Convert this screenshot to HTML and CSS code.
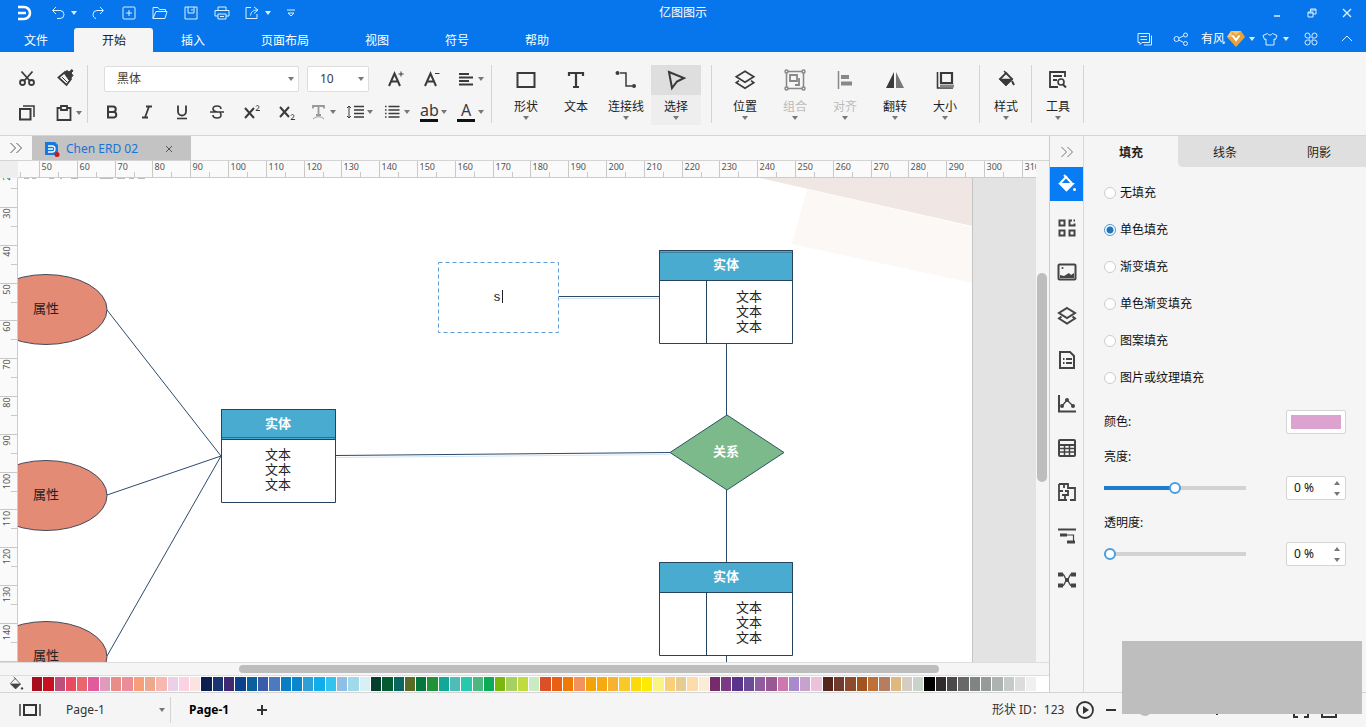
FILE: index.html
```html
<!DOCTYPE html>
<html lang="zh-CN">
<head>
<meta charset="utf-8">
<meta name="viewport" content="width=device-width, initial-scale=1">
<title>亿图图示</title>
<link rel="stylesheet" href="styles.css">
</head>
<body>
<svg class="sprite" aria-hidden="true">
  <symbol id="caret" viewBox="0 0 6 4"><path d="M0 0h6L3 4z" fill="currentColor"/></symbol>
  <symbol id="caret-up" viewBox="0 0 6 4"><path d="M0 4h6L3 0z" fill="currentColor"/></symbol>
  <symbol id="chevrons" viewBox="0 0 14 14"><path d="M1.500 2l5 5-5 5M7.500 2l5 5-5 5"/></symbol>
  <symbol id="layers" viewBox="0 0 20 20"><path d="M10 2l8 5-8 5-8-5z"/><path d="M4.500 10.500L2 12.500l8 5 8-5-2.500-2"/></symbol>
  <symbol id="bucket" viewBox="0 0 20 20"><path d="M9 3l6.500 7-6 6L3 9.500z"/><path d="M3.500 10h12l-6 6z" fill="currentColor"/><path d="M7 1l3 3"/><circle cx="17.500" cy="15.500" r="1.500" fill="currentColor" stroke="none"/></symbol>
</svg>

<div class="app">
  <header class="top">
    <div class="titlebar">
      <div class="quick">
        <svg class="logo" viewBox="0 0 18 16"><path d="M2 2h6a6 6 0 0 1 0 12H2M2 8h8" fill="none" stroke="#fff" stroke-width="2.600"/></svg>
        <button class="q q-undo" aria-label="撤销"><svg class="i14" viewBox="0 0 14 14"><path d="M5 1L1.500 4.500 5 8M2 4.500h7a3.500 3.500 0 0 1 0 8H6"/></svg><svg class="caret"><use href="#caret"/></svg></button>
        <button class="q" aria-label="重做"><svg class="i14" viewBox="0 0 14 14"><path d="M9 1l3.500 3.500L9 8M12 4.500H6a4 4 0 0 0-4 4c0 2 1 3.500 3 4"/></svg></button>
        <button class="q" aria-label="新建"><svg class="i14" viewBox="0 0 14 14"><rect x="1" y="1" width="12" height="12" rx="1"/><path d="M7 4v6M4 7h6"/></svg></button>
        <button class="q" aria-label="打开"><svg class="i16" viewBox="0 0 16 14"><path d="M1 12.500V1.500h5l1.500 2h6v2M1 12.500l3-7h11l-2 7z"/></svg></button>
        <button class="q" aria-label="保存"><svg class="i14" viewBox="0 0 14 14"><path d="M1 1h12v12H1zM4 1v6h6V1M8 3v2"/></svg></button>
        <button class="q" aria-label="打印"><svg class="i16" viewBox="0 0 16 14"><path d="M4 4V1h8v3M4 10H1V4.500h14V10h-3M4 8h8v5H4zM6 10.500h4"/></svg></button>
        <button class="q q-export" aria-label="导出"><svg class="i14" viewBox="0 0 14 14"><path d="M6 1.500H1v11h11V8M9 1l4 3-4 3.500M12.500 4C8 4 6 6 5.500 9.500"/></svg><svg class="caret"><use href="#caret"/></svg></button>
        <button class="q q-more" aria-label="更多"><svg class="i8" viewBox="0 0 8 8"><path d="M0 1h8M1 4l3 3 3-3z"/></svg></button>
      </div>
      <h1 class="title">亿图图示</h1>
      <div class="window-controls">
        <button aria-label="最小化"><svg class="i10" viewBox="0 0 10 10"><path d="M2 8h6" stroke-width="1.500"/></svg></button>
        <button aria-label="还原"><svg class="i10" viewBox="0 0 10 10"><path d="M1 4h5v5H1zM3.500 4V1H9v5H6M1 5h5M3.500 2H9"/></svg></button>
        <button aria-label="关闭"><svg class="i10" viewBox="0 0 10 10"><path d="M1 1l8 8M9 1L1 9" stroke-width="1.400"/></svg></button>
      </div>
    </div>
    <div class="menubar">
      <nav class="menu">
        <button class="menu-file">文件</button><button class="active">开始</button><button>插入</button><button>页面布局</button><button>视图</button><button>符号</button><button>帮助</button>
      </nav>
      <div class="account">
        <button aria-label="消息"><svg class="i16" viewBox="0 0 16 14"><path d="M1 1.500h11.500v9H5l-2 2v-2H1zM3.500 4.500h6.500M3.500 7.500h6.500M14.500 3.500v9.500H7"/></svg></button>
        <button aria-label="分享"><svg class="i16" viewBox="0 0 16 14"><circle cx="3.500" cy="7" r="2.500"/><circle cx="12.500" cy="3" r="2"/><circle cx="12.500" cy="11.500" r="2"/><path d="M6 6l4.500-2M6 8l4.500 2.500"/></svg></button>
        <button class="user">有风<svg class="badge" viewBox="0 0 18 16"><path d="M4 0h10l4 6-9 10L0 6z" fill="#e9a23b"/><path d="M4 0h10l-5 4zM0 6l4-6 2 6z" fill="#f6c56f"/><path d="M5.500 4.500L9 9l3.500-4.500" fill="none" stroke="#fff" stroke-width="2"/></svg><svg class="caret"><use href="#caret"/></svg></button>
        <button class="theme" aria-label="主题"><svg class="i16" viewBox="0 0 16 14"><path d="M5.500 1.500c1 2 4 2 5 0l4.500 2-1.500 4L12 7v6H4V7l-1.500.5L1 3.500z"/></svg><svg class="caret"><use href="#caret"/></svg></button>
        <button aria-label="应用"><svg class="i14" viewBox="0 0 14 14"><path d="M6 6H3.500A2.500 2.500 0 1 1 6 3.500zM8 6V3.500A2.500 2.500 0 1 1 10.500 6zM6 8v2.500A2.500 2.500 0 1 1 3.500 8zM8 8h2.500A2.500 2.500 0 1 1 8 10.500z"/></svg></button>
        <button aria-label="折叠功能区"><svg class="i10" viewBox="0 0 10 10"><path d="M0 7l5-5 5 5"/></svg></button>
      </div>
    </div>
  </header>

  <div class="ribbon">
    <div class="group clipboard">
      <button aria-label="剪切"><svg class="i18" viewBox="0 0 18 18"><g stroke-width="1.800"><circle cx="4.500" cy="13.500" r="2.500"/><circle cx="13.500" cy="13.500" r="2.500"/><path d="M3.500 2.500l8 9M14.500 2.500l-8 9"/></g></svg></button>
      <button aria-label="格式刷"><svg class="i18" viewBox="0 0 18 18"><path d="M1.500 8.500L8 3l6 7-4.500 6z" fill="none" stroke-width="1.800"/><path d="M7 4l5 7 4-4.500L14 4l2-2-1-1.500L12 3 10 1.500z" fill="currentColor"/><path d="M5 8l5 5"/></svg></button>
      <button aria-label="复制"><svg class="i18" viewBox="0 0 18 18"><path d="M2 5h10.500v10.500H2z" stroke-width="2"/><path d="M5 2h11v11" stroke-width="1.500"/></svg></button>
      <button class="drop" aria-label="粘贴"><svg class="i18" viewBox="0 0 18 18"><path d="M6 4H2.500v12h13V4H12" stroke-width="1.800"/><path d="M6 2h6v4H6z" stroke-width="1.800"/></svg><svg class="caret"><use href="#caret"/></svg></button>
    </div>
    <div class="group font">
      <div class="font-row first">
        <label class="pick pick-font"><select aria-label="字体"><option>黑体</option></select><svg class="caret"><use href="#caret"/></svg></label>
        <label class="pick pick-size"><select aria-label="字号"><option>10</option></select><svg class="caret"><use href="#caret"/></svg></label>
        <div class="font-tools">
          <button aria-label="增大字号"><svg class="i18" viewBox="0 0 18 18"><path d="M2 16L7.500 3.500 13 16M4 11.500h7" stroke-width="2"/><path d="M11.500 4h5M14 1.500v5"/></svg></button>
          <button aria-label="减小字号"><svg class="i18" viewBox="0 0 18 18"><path d="M2 16L7.500 3.500 13 16M4 11.500h7" stroke-width="2"/><path d="M12 3.500h4.500"/></svg></button>
        </div>
        <button class="drop" aria-label="对齐方式"><svg class="i18" viewBox="0 0 18 18"><path d="M2 4h10M2 7.500h14M2 11h10M2 14.500h14" stroke-width="1.800"/></svg><svg class="caret"><use href="#caret"/></svg></button>
      </div>
      <div class="font-row">
        <button aria-label="加粗"><svg class="i18" viewBox="0 0 18 18"><path d="M5 3.500h5a2.700 2.700 0 0 1 0 5.500H5zM5 9h6a2.800 2.800 0 0 1 0 5.500H5z" stroke-width="2"/></svg></button>
        <button aria-label="斜体"><svg class="i18" viewBox="0 0 18 18"><path d="M8 3.500h6M4 14.500h6M11 3.500L7 14.500" stroke-width="1.800"/></svg></button>
        <button aria-label="下划线"><svg class="i18" viewBox="0 0 18 18"><path d="M5 2.500v6a4 4 0 0 0 8 0v-6" stroke-width="1.800"/><path d="M4 15.500h10" stroke-width="1.600"/></svg></button>
        <button aria-label="删除线"><svg class="i18" viewBox="0 0 18 18"><path d="M13 6c0-4-8-4-8 0 0 2 2 2.500 4 3M5 12c0 4 8 4 8 0 0-1-.5-2-1-2.500M2 9h14" stroke-width="1.600"/></svg></button>
        <button aria-label="上标"><svg class="i18" viewBox="0 0 18 18"><path d="M2 5l9 10M11 5L2 15" stroke-width="2"/><path d="M13 3.500c1-2 4-.5 2.500 1.500L13 7.500h4"/></svg></button>
        <button aria-label="下标"><svg class="i18" viewBox="0 0 18 18"><path d="M2 4l9 10M11 4L2 14" stroke-width="2"/><path d="M13 12.500c1-2 4-.5 2.500 1.500L13 16.500h4"/></svg></button>
        <button class="drop faded" aria-label="文字效果"><svg class="i18" viewBox="0 0 18 18"><path d="M4 5.500V3h11v2.500M9.500 3v9M7 12h5" stroke-width="1.800"/><path d="M4 16c3-3 8-3 11 0"/></svg><svg class="caret"><use href="#caret"/></svg></button>
        <button class="drop" aria-label="行距"><svg class="i18" viewBox="0 0 18 18"><path d="M3 3v12M1 5l2-2 2 2M1 13l2 2 2-2" /><path d="M8 3.500h10M8 7h10M8 10.500h10M8 14h10" stroke-width="1.600"/></svg><svg class="caret"><use href="#caret"/></svg></button>
        <button class="drop" aria-label="项目符号"><svg class="i18" viewBox="0 0 18 18"><path d="M2 3.500h1.500M2 7h1.500M2 10.500h1.500M2 14h1.500M5.500 3.500h11M5.500 7h11M5.500 10.500h11M5.500 14h11" stroke-width="1.500"/></svg><svg class="caret"><use href="#caret"/></svg></button>
        <button class="drop" aria-label="突出显示"><span class="letter">ab</span><svg class="caret"><use href="#caret"/></svg></button>
        <button class="drop" aria-label="字体颜色"><span class="letter letter-a">A</span><svg class="caret"><use href="#caret"/></svg></button>
      </div>
    </div>
    <div class="group big">
      <button><svg class="i22" viewBox="0 0 22 22"><path d="M2.500 4h17v14h-17z" stroke-width="2"/></svg>形状<svg class="caret"><use href="#caret"/></svg></button>
      <button><svg class="i22" viewBox="0 0 22 22"><path d="M4 7V4h14v3M11 4v14M8 18h6" stroke-width="2.200"/></svg>文本</button>
      <button><svg class="i22" viewBox="0 0 22 22"><circle cx="2.500" cy="4" r="2" fill="currentColor" stroke="none"/><circle cx="19" cy="17" r="2" fill="currentColor" stroke="none"/><path d="M5 4h6v13h6"/></svg>连接线<svg class="caret"><use href="#caret"/></svg></button>
      <button class="selected"><svg class="i22" viewBox="0 0 22 22"><path d="M4 3l15 6-7 3.500L7 19z" stroke-width="2"/></svg>选择<svg class="caret"><use href="#caret"/></svg></button>
    </div>
    <div class="group big arrange">
      <button><svg class="i22"><use href="#layers"/></svg>位置<svg class="caret"><use href="#caret"/></svg></button>
      <button disabled><svg class="i22" viewBox="0 0 22 22"><path d="M2.500 2.500h17v17h-17z"/><path d="M6 6h7v6H6zM15 9v7h-4" stroke-width="1.800"/><g fill="#f5f5f5"><circle cx="2.500" cy="2.500" r="1.500"/><circle cx="19.500" cy="2.500" r="1.500"/><circle cx="2.500" cy="19.500" r="1.500"/><circle cx="19.500" cy="19.500" r="1.500"/></g></svg>组合<svg class="caret"><use href="#caret"/></svg></button>
      <button disabled><svg class="i22" viewBox="0 0 22 22"><path d="M4.500 2v18"/><path d="M7 8h8M7 14.500h11" stroke-width="4"/></svg>对齐<svg class="caret"><use href="#caret"/></svg></button>
      <button><svg class="i22" viewBox="0 0 22 22"><path d="M10 3v16H2z" fill="currentColor" stroke="none"/><path d="M12 3v16h8z" fill="#777" stroke="none"/></svg>翻转<svg class="caret"><use href="#caret"/></svg></button>
      <button><svg class="i22" viewBox="0 0 22 22"><path d="M3.500 3v16H19" stroke-width="1.600"/><path d="M7 4h11v10H7z" stroke-width="2.200"/><path d="M6 15.500h14v3H6z" fill="#888" stroke="none"/></svg>大小<svg class="caret"><use href="#caret"/></svg></button>
    </div>
    <div class="group big single"><button><svg class="i22" viewBox="0 0 22 22"><g transform="translate(2 1)"><path d="M9 3l6 6-6 6-6-6z" stroke-width="1.800"/><path d="M3.500 9.500h11L9 15z" fill="currentColor"/><path d="M7 1l3 3"/><path d="M15 11l2 4" stroke-width="2"/></g></svg>样式<svg class="caret"><use href="#caret"/></svg></button></div>
    <div class="group big single"><button><svg class="i22" viewBox="0 0 22 22"><path d="M18 8V3H3v15h8M6 7h9M6 11h4" stroke-width="1.800"/><circle cx="14" cy="13" r="3" stroke-width="1.600"/><path d="M16 15.500l3 3" stroke-width="2"/></svg>工具<svg class="caret"><use href="#caret"/></svg></button></div>
  </div>

  <main class="work">
    <section class="editor">
      <div class="doc-tabs">
        <button class="expand" aria-label="展开"><svg class="i14"><use href="#chevrons"/></svg></button>
        <div class="doc-tab"><svg class="doc-icon" viewBox="0 0 16 16"><path d="M1 1h10l3 3v10H1z" fill="#1478dc"/><path d="M4 5h4a2.500 2.500 0 0 1 0 6H4M4 8h5" fill="none" stroke="#fff" stroke-width="1.300"/><circle cx="13" cy="13.500" r="2.500" fill="#d01818"/></svg><a href="#page">Chen ERD 02</a><button aria-label="关闭文档"><svg class="i8" viewBox="0 0 8 8"><path d="M1 1l6 6M7 1L1 7"/></svg></button></div>
      </div>
      <div class="ruler-corner"></div>
      <svg class="ruler-h" id="ruler-h"></svg>
      <svg class="ruler-v" id="ruler-v"></svg>
      <div class="stage" id="page">
        <svg class="diagram" width="1018" height="485" viewBox="18 178 1018 485">
          <g class="backdrop">
            <path d="M18 178h954v485H18z" fill="#fff"/>
            <path d="M760 178h212v48z" fill="#f0e7e4"/>
            <path d="M807 189l165 38v56l-180-39z" fill="#fcf8f6"/>
          </g>
          <path d="M972.500 178v485" stroke="#c4c4c4"/>
          <path d="M24 178.500h5M32 178.500h4M49 178.500h5M60 178.500h2M71 178.500h7M100 178.500h13M117 178.500h8M129 178.500h5M138 178.500h7" stroke="#bbb"/>
          <g class="wire">
            <path d="M107 310L221 456L107 495M221 456L107 656M336 455.500L670 452.500M559 296.500H659M726.500 344V415M726.500 490V562M726.500 656V663"/>
          </g>
          <path d="M336 457.500L670 454.500M559 298.500H659" stroke="#d3e5ee"/>
          <g class="attribute"><ellipse cx="46" cy="309.500" rx="61" ry="35"/><ellipse cx="46" cy="495.500" rx="61" ry="35"/><ellipse cx="46" cy="656.500" rx="61" ry="35"/></g>
          <g class="label"><text x="46" y="313">属性</text><text x="46" y="499">属性</text><text x="46" y="660">属性</text></g>
          <g class="entity"><path d="M221.500 409.500h114v93h-114z"/><path class="head" d="M221.500 409.500h114v30h-114z"/><path d="M222 437.500h113" opacity=".6"/></g>
          <g class="entity"><path d="M659.500 250.500h133v93h-133zM706.500 280v63"/><path class="head" d="M659.500 250.500h133v30h-133z"/><path d="M660 252.500h132" opacity=".4"/></g>
          <g class="entity"><path d="M659.500 562.500h133v93h-133zM706.500 592v63"/><path class="head" d="M659.500 562.500h133v30h-133z"/></g>
          <path class="relation" d="M670 452.500L727 415l57 37.500L727 490z"/>
          <g class="label heading"><text x="278" y="428">实体</text><text x="726" y="269">实体</text><text x="726" y="581">实体</text><text x="726" y="456">关系</text></g>
          <g class="label">
            <text x="278" y="459">文本</text><text x="278" y="474">文本</text><text x="278" y="489">文本</text>
            <text x="749" y="301">文本</text><text x="749" y="316">文本</text><text x="749" y="331">文本</text>
            <text x="749" y="612">文本</text><text x="749" y="627">文本</text><text x="749" y="642">文本</text>
          </g>
          <path class="editing" d="M438.500 262.500h120v70h-120z"/>
          <g class="label"><text x="497" y="301">s</text></g><path d="M502.500 290v13" stroke="#222"/>
        </svg>
      </div>
      <div class="scroll-v"><span></span></div>
      <div class="scroll-h"><span></span></div>
      <div class="palette"><button aria-label="填充颜色"><svg class="i16"><use href="#bucket"/></svg></button><div class="swatches" id="swatches"></div></div>
    </section>

    <aside class="strip">
      <button class="collapse" aria-label="收起"><svg class="i14"><use href="#chevrons"/></svg></button>
      <button class="active" aria-label="填充"><svg class="i20"><use href="#bucket"/></svg></button>
      <button aria-label="符号库"><svg class="i20" viewBox="0 0 20 20"><path d="M2.500 2.500h5v5h-5zM15 2.500h-2.500v5h5V5.500M2.500 12.500h5v5h-5zM12.500 12.500h5v5h-5z"/><path d="M16.500 2.500H18"/></svg></button>
      <button aria-label="图片"><svg class="i20" viewBox="0 0 20 20"><rect x="1.500" y="2.500" width="17" height="15" rx="1"/><path d="M3 16v-3l4 1 5-3 2 2 3-2v5z" fill="currentColor" stroke="none"/><circle cx="5.500" cy="6" r="1" fill="currentColor" stroke="none"/></svg></button>
      <button aria-label="图层"><svg class="i20"><use href="#layers"/></svg></button>
      <button aria-label="备注"><svg class="i20" viewBox="0 0 20 20"><path d="M3 2h10l4 4v12H3z"/><path d="M6 9h1.500M9 9h6M6 13h1.500M9 13h6"/></svg></button>
      <button aria-label="图表"><svg class="i20" viewBox="0 0 20 20"><path d="M2 1v16.500h17" /><path d="M5 12l5-6 6 6" stroke-width="1.300"/><g fill="currentColor" stroke="none"><circle cx="5" cy="12" r="2"/><circle cx="10" cy="6" r="2"/><circle cx="16" cy="12" r="2"/></g></svg></button>
      <button aria-label="表格"><svg class="i20" viewBox="0 0 20 20"><rect x="2" y="2" width="16" height="16" rx="1"/><path d="M2 7h16" /><path d="M2 10.500h16M2 14h16M7.500 7v11M12.500 7v11" stroke-width="1.500"/></svg></button>
      <button aria-label="平面图"><svg class="i20" viewBox="0 0 20 20"><path d="M2 2h9v4h7v12h-5M10 18H2V2M2 9h4M7 2v4M8 9h3v4H8M8 13v5M5 13h3M11 6v1" stroke-width="1.800"/></svg></button>
      <button aria-label="甘特图"><svg class="i20" viewBox="0 0 20 20"><path d="M1 3.500h18"/><path d="M3 9h7M10 16h8" stroke-width="3"/><path d="M10 9h6.500v7" stroke-width="1.200"/></svg></button>
      <button aria-label="思维导图"><svg class="i20" viewBox="0 0 20 20"><path d="M5 4c3 0 3 6 5 6s2-6 5-6M5 16c3 0 3-6 5-6s2 6 5 6" stroke-width="1.300"/><path d="M1 4.500h5M14 4.500h5M1 15.500h5M14 15.500h5M8 10h4" stroke-width="4"/></svg></button>
    </aside>

    <aside class="panel">
      <div class="panel-tabs"><button class="active">填充</button><button>线条</button><button>阴影</button></div>
      <form class="panel-body">
        <fieldset class="fills" aria-label="填充">
          <label><input type="radio" name="fill">无填充</label>
          <label><input type="radio" name="fill" checked>单色填充</label>
          <label><input type="radio" name="fill">渐变填充</label>
          <label><input type="radio" name="fill">单色渐变填充</label>
          <label><input type="radio" name="fill">图案填充</label>
          <label><input type="radio" name="fill">图片或纹理填充</label>
        </fieldset>
        <div class="field"><label for="color">颜色:</label><input type="color" id="color" value="#dca3d0"></div>
        <label class="caption" for="bright">亮度:</label>
        <div class="field"><input class="half" type="range" id="bright" value="50"><div class="spin"><input type="text" value="0 %" aria-label="亮度值"><button type="button" aria-label="增加"><svg class="caret"><use href="#caret-up"/></svg></button><button type="button" aria-label="减少"><svg class="caret"><use href="#caret"/></svg></button></div></div>
        <label class="caption" for="alpha">透明度:</label>
        <div class="field"><input type="range" id="alpha" value="0"><div class="spin"><input type="text" value="0 %" aria-label="透明度值"><button type="button" aria-label="增加"><svg class="caret"><use href="#caret-up"/></svg></button><button type="button" aria-label="减少"><svg class="caret"><use href="#caret"/></svg></button></div></div>
      </form>
    </aside>
  </main>

  <footer class="status">
    <button class="view" aria-label="页面视图"><svg class="i22" viewBox="0 0 22 14"><path d="M1 1v12M21 1v12" stroke-width="1.400"/><path d="M5 2h12v10H5z" stroke-width="2"/></svg></button>
    <label class="pick pick-page"><select aria-label="页面"><option>Page-1</option></select><svg class="caret"><use href="#caret"/></svg></label>
    <button class="page-tab">Page-1</button>
    <button aria-label="添加页面"><svg class="i10" viewBox="0 0 10 10"><path d="M5 0v10M0 5h10" stroke-width="2"/></svg></button>
    <div class="status-right">
      <span>形状 ID：123</span>
      <button aria-label="播放"><svg class="i18" viewBox="0 0 18 18"><circle cx="9" cy="9" r="8" stroke-width="1.800"/><path d="M7 5l6 4-6 4z" fill="currentColor" stroke="none"/></svg></button>
      <button aria-label="缩小"><svg class="i10" viewBox="0 0 10 10"><path d="M0 5h10" stroke-width="2"/></svg></button>
      <input class="zoom" type="range" value="15" aria-label="缩放">
      <button aria-label="放大"><svg class="i10" viewBox="0 0 10 10"><path d="M5 0v10M0 5h10" stroke-width="2"/></svg></button>
      <span>100%</span>
      <button class="fit" aria-label="适应页面"><svg class="i16" viewBox="0 0 16 16"><path d="M1 5V1h4M11 1h4v4M15 11v4h-4M5 15H1v-4" stroke-width="2"/></svg></button>
      <button aria-label="全屏"><svg class="i16" viewBox="0 0 16 16"><path d="M1 3h14v12H1z" stroke-width="2"/></svg></button>
    </div>
  </footer>
  <div class="cover"></div>
</div>
<script src="app.js"></script>
</body>
</html>
```

FILE: styles.css
```css
* { box-sizing: border-box; }
body {
  margin: 0;
  color: #222;
  background: #f5f5f5;
  font: 12px/16px "Noto Sans", "Noto Sans CJK SC", sans-serif;
}
button, input, select { font: inherit; color: inherit; margin: 0; }
button { display: flex; align-items: center; justify-content: center; padding: 0; border: 0; background: none; }
svg { display: block; flex: none; fill: none; stroke: currentColor; }
.sprite { position: absolute; width: 0; height: 0; }
.i8 { width: 8px; height: 8px; }
.i10 { width: 10px; height: 10px; }
.i14 { width: 14px; height: 14px; }
.i16 { width: 16px; height: 16px; }
.i18 { width: 18px; height: 18px; }
.i20 { width: 20px; height: 20px; }
.i22 { width: 22px; height: 22px; }
.caret { width: 6px; height: 4px; stroke: none; color: #777; }
.app { display: grid; grid-template-rows: auto auto minmax(0, 1fr) auto; height: 100vh; overflow: hidden; }

/* title bar and menu */
.top { background: #0776ed; color: #fff; }
.top svg { stroke: #d9f1ff; }
.top .caret { color: #d9f1ff; stroke: none; }
.titlebar { display: grid; grid-template-columns: 1fr auto 1fr; height: 26px; align-items: center; }
.title { margin: 0; font-size: 12px; font-weight: 400; }
.quick { display: flex; align-items: center; padding-left: 16px; }
.logo { width: 18px; height: 16px; margin-right: 12px; }
.q { width: 31px; height: 20px; }
.q-undo { width: 36px; gap: 6px; }
.q-export { width: 42px; gap: 6px; }
.q-more { width: 24px; }
.window-controls { display: flex; justify-content: flex-end; padding-right: 2px; }
.window-controls button { width: 35px; height: 20px; }
.menubar { display: flex; justify-content: space-between; height: 26px; }
.menu { display: flex; padding-top: 2px; }
.menu button { padding: 1px 28px 0; }
.menu .menu-file { padding: 1px 26px 0 24px; }
.menu .active { padding: 1px 27px 0 28px; color: #222; background: #f5f5f5; border-radius: 3px 3px 0 0; }
.account { display: flex; align-items: center; padding-right: 1px; }
.account button { width: 36px; height: 22px; }
.account .user { width: 58px; gap: 2px; }
.account .user .caret { margin-left: 2px; }
.badge { width: 18px; height: 16px; }
.account .badge { stroke: none; }
.account .theme { gap: 5px; }

/* ribbon */
.ribbon { display: flex; height: 84px; padding-top: 13px; border-bottom: 1px solid #d4d4d4; color: #3a3a3a; }
.group { height: 58px; border-right: 1px solid #d4d4d4; }
.clipboard { display: grid; grid-template-columns: 36px 36px; grid-template-rows: 24px 24px; row-gap: 11px; column-gap: 3px; width: 88px; padding: 1px 0 0 9px; }
.clipboard .drop { padding-left: 7px; }
.drop { width: 37px; height: 24px; justify-content: flex-start; gap: 3px; padding-left: 5px; }
.font { padding: 0 2px 0 6px; }
.font-row { display: flex; align-items: center; }
.font-row button { width: 35px; height: 24px; }
.font-row .drop { width: 37px; }
.font-row.first { height: 28px; margin-bottom: 7px; padding-left: 10px; }
.font-tools { display: flex; margin: 0 2px 0 auto; }
.font-tools button { width: 36px; }
.faded { color: #999; }
.letter { width: 18px; height: 19px; border-bottom: 3px solid #111; font-size: 16px; line-height: 15px; text-align: center; }
.pick { display: grid; align-items: center; }
.pick select, .pick .caret { grid-area: 1 / 1; }
.pick .caret { justify-self: end; margin-right: 5px; pointer-events: none; }
.pick select { width: 100%; height: 26px; padding: 0 12px; appearance: none; border: 1px solid #ddd; border-radius: 2px; background: #fff; }
.pick-font { width: 195px; margin-right: 8px; }
.pick-size { width: 62px; }
.big { display: flex; padding: 0 10px 0 9px; }
.big button { flex-direction: column; justify-content: flex-start; width: 50px; height: 60px; padding-top: 4px; line-height: 16px; color: #222; }
.big button .i22 { margin-bottom: 8px; stroke-width: 1.5; color: #3a3a3a; }
.big .caret { margin-top: 1px; }
.big .selected { background: linear-gradient(#dedede 30px, #eeeeee 30px); }
.big button:disabled { color: #bbb; }
.big button:disabled .i22 { color: #888; }
.arrange { padding: 0 9px 0 8px; }
.single { padding: 0 0 0 1px; }

/* editor */
.work { display: grid; grid-template-columns: minmax(0, 1fr) 34px 282px; min-height: 0; }
.editor {
  display: grid;
  grid-template-columns: 18px minmax(0, 1fr) 13px;
  grid-template-rows: 25px 17px minmax(0, 1fr) 13px 17px;
  border-right: 1px solid #ccc;
  min-height: 0;
}
.doc-tabs { grid-column: 1 / -1; display: flex; background: #f8f8f8; border-bottom: 1px solid #d4d4d4; }
.expand { width: 32px; color: #555; }
.doc-tab { display: flex; align-items: center; padding: 2px 18px 0 12px; background: #c3c3c3; color: #555; }
.doc-icon { width: 16px; height: 16px; margin-right: 6px; stroke: none; }
.doc-tab a { color: #1b72d6; text-decoration: none; margin-right: 27px; }
.ruler-corner { background: #eee; }
.ruler-h { grid-column: 2; width: 100%; height: 17px; background: #fafafa; border-bottom: 1px solid #ccc; }
.ruler-v { grid-column: 1; grid-row: 3; width: 18px; height: 100%; background: #fafafa; border-right: 1px solid #ccc; overflow: hidden; }
.ruler-h line, .ruler-v line { stroke: #c8c8c8; }
.ruler-h text, .ruler-v text { font-size: 9px; fill: #555; stroke: none; }
.stage { grid-area: 3 / 2; background: #e3e3e3; overflow: hidden; }
.diagram text, .backdrop { stroke: none; }
.wire { stroke: #2c4a6b; }
.attribute { fill: #e38b74; stroke: #454a5c; }
.entity { fill: #fff; stroke: #25435c; }
.entity .head { fill: #49abcf; }
.relation { fill: #7cba8b; stroke: #2c5560; }
.label { font-family: "Liberation Sans", "Noto Sans CJK SC", sans-serif; font-size: 13px; fill: #222; text-anchor: middle; }
.heading { fill: #fff; font-weight: 700; }
.editing { stroke: #5a9bd8; stroke-dasharray: 4 3; }
.scroll-v { grid-area: 2 / 3 / 4 / 4; display: grid; grid-template-rows: 112fr 210fr 180fr; padding: 0 1px; background: #f5f5f5; }
.scroll-v span { grid-row: 2; background: #bdbdbd; border-radius: 5px; width: 10px; }
.scroll-h { grid-area: 4 / 1 / 5 / 4; display: grid; grid-template-columns: 239fr 700fr 110fr; padding: 2px 0; border-top: 1px solid #ddd; }
.scroll-h span { grid-column: 2; background: #bdbdbd; border-radius: 4px; }
.palette { grid-area: 5 / 1 / 6 / 4; display: flex; padding-right: 12px; border-top: 1px solid #ddd; background: #fff; }
.palette > button { width: 32px; background: #f5f5f5; color: #444; }
.swatches { flex: 1; display: flex; gap: 1px; padding: 1px 0; }
.swatches i { flex: 1; }

/* side strip */
.strip { display: grid; grid-template-rows: 31px 34px; grid-auto-rows: 44px; align-content: start; border-right: 1px solid #d8d8d8; color: #444; }
.strip .collapse { color: #777; }
.strip .active { background: #087cf5; color: #fff; }
.strip .active ~ button { padding-top: 10px; }
.strip .i20 { stroke-width: 2; }

/* format panel */
.panel-tabs { display: grid; grid-template-columns: repeat(3, 1fr); height: 31px; }
.panel-tabs button { background: #dfdfdf; padding-top: 2px; }
.panel-tabs .active { background: #f5f5f5; font-weight: 700; }
.panel-tabs .active + button { border-bottom-left-radius: 5px; }
.panel-body { padding: 7px 20px 0; color: #111; }
.fills { margin: 0; padding: 0; border: 0; }
.fills label { display: flex; align-items: center; height: 37px; gap: 4px; }
.fills input { appearance: none; width: 12px; height: 12px; border: 1px solid #ccc; border-radius: 50%; background: #fff; }
.fills input:checked { border-color: #4b9bdc; background: radial-gradient(circle, #2474b8 3px, #fff 4px); }
.field { display: flex; align-items: center; justify-content: space-between; height: 24px; }
.fills + .field { margin-top: 14px; }
.caption { display: block; margin: 15px 0 11px; }
input[type="color"] { width: 60px; height: 24px; padding: 4px; border: 1px solid #d4d4d4; border-radius: 2px; background: #fff; }
input[type="color"]::-webkit-color-swatch-wrapper { padding: 0; }
input[type="color"]::-webkit-color-swatch { border: 0; }
input[type="range"] { appearance: none; width: 142px; height: 12px; background: linear-gradient(#d2d2d2, #d2d2d2) center / 100% 4px no-repeat; }
input[type="range"].half { background: linear-gradient(90deg, #1f7bcb 50%, #d2d2d2 50%) center / 100% 4px no-repeat; }
input[type="range"]::-webkit-slider-thumb { appearance: none; width: 12px; height: 12px; border: 2px solid #4a9fe0; border-radius: 50%; background: #fff; }
.spin { display: grid; grid-template-columns: 1fr 16px; grid-template-rows: 1fr 1fr; width: 60px; height: 24px; border: 1px solid #d4d4d4; border-radius: 2px; background: #fff; }
.spin input { grid-row: 1 / 3; width: 100%; min-width: 0; padding: 0 0 0 7px; border: 0; background: none; }

/* status bar */
.status { display: flex; align-items: center; height: 35px; border-top: 1px solid #d4d4d4; color: #333; }
.view { width: 60px; }
.pick-page { width: 111px; border-right: 1px solid #d4d4d4; }
.pick-page select { padding: 0 6px; border: 0; background: none; }
.page-tab { margin: 0 28px 0 18px; font-weight: 700; color: #000; }
.status-right { display: flex; align-items: center; margin-left: auto; padding-right: 29px; gap: 12px; }
.status-right .zoom { width: 68px; margin: 0 2px; }
.status-right .zoom::-webkit-slider-thumb { border: 0; background: #bbb; }
.status-right .fit { margin-left: 16px; }
.cover { position: fixed; right: 4px; bottom: 13px; width: 240px; height: 73px; background: #bebebe; }
```

FILE: app.js
```js
const NS = "http://www.w3.org/2000/svg";
const STEP = 37.8;

function add(parent, name, attrs, text) {
  const el = document.createElementNS(NS, name);
  for (const key in attrs) el.setAttribute(key, attrs[key]);
  if (text !== undefined) el.textContent = text;
  parent.append(el);
}

const rulerH = document.getElementById("ruler-h");
const rulerV = document.getElementById("ruler-v");

function drawRulers() {
  rulerH.replaceChildren();
  rulerV.replaceChildren();
  const width = rulerH.getBoundingClientRect().width;
  const height = rulerV.getBoundingClientRect().height;

  add(rulerH, "line", { x1: 2.5, x2: 2.5, y1: 11, y2: 17 });
  for (let n = 5; 21 + (n - 5) * STEP < width - 4; n++) {
    const x = Math.round(21 + (n - 5) * STEP) + 0.5;
    const mid = Math.round(x + STEP / 2) + 0.5;
    add(rulerH, "line", { x1: x, x2: x, y1: 0, y2: 17 });
    add(rulerH, "line", { x1: mid, x2: mid, y1: 11, y2: 17 });
    add(rulerH, "text", { x: x + 2, y: 9 }, n * 10);
  }

  for (let n = 2; 29 + (n - 3) * STEP < height; n++) {
    const y = Math.round(29 + (n - 3) * STEP) + 0.5;
    const mid = Math.round(y + STEP / 2) + 0.5;
    const half = n < 10 ? 5 : 8;
    add(rulerV, "line", { x1: 0, x2: 17, y1: y, y2: y });
    add(rulerV, "line", { x1: 11, x2: 17, y1: mid, y2: mid });
    add(rulerV, "text", { "text-anchor": "middle", transform: `translate(10 ${y + 1 + half}) rotate(-90)` }, n * 10);
  }
}
drawRulers();
window.addEventListener("resize", drawRulers);

const colors = `a80d1c c9101f bd4f7d e84a62 e8666c e05a9c e09abb e88d87 ec8c99 f79f78 eda98d f6b8b0 ecd0e8 fbd2e3 fce2e0
0a1f50 1c3470 3f2a72 0a418a 09609c 3a5cab 4e79be 0a7ec4 0a86cc 2f9fd8 0fadea 33c3ee 90bfe5 a0daea d6f0f4
053f30 055c30 0a6660 5a6b28 06763f 229236 12a898 4fbcb8 26c9ac 4cb880 0cab55 7ab80f a6d062 bfdc3c c9eac2
db5026 e96110 ef7a05 f2925e f0a30a f8a912 f6b234 f8ca28 fadb08 fdec00 faf385 f8d07a e6cb92 fddcab fbecd6
762b6b 7c3a84 5a348b 6b4a98 905c9f 995892 cc78ae a98acc c6a2cd ebc1db
54251a 713a2e 8e4b2b a25420 bd7037 b57e62 dfb880 d3cdc4 c8d4c9
000000 302c2e 4c494a 686868 818484 969b99 adb3b0 c6cac8 dcdcdc f0f0f0`.split(/\s+/);
const swatches = document.getElementById("swatches");
for (const color of colors) {
  const cell = document.createElement("i");
  cell.style.background = "#" + color;
  swatches.append(cell);
}
```
